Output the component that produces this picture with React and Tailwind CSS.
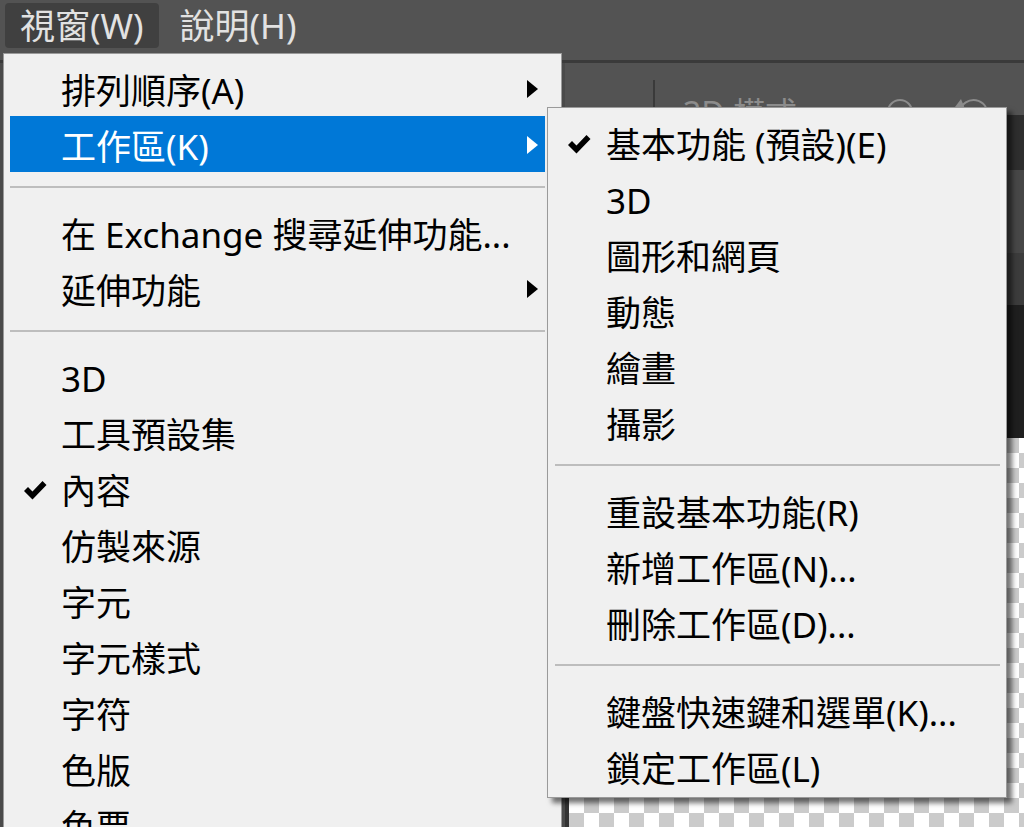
import clsx from 'clsx';

const windowMenu = [
  { label: '排列順序(A)', arrow: true },
  { label: '工作區(K)', arrow: true, active: true },
  { sep: true },
  { label: '在 Exchange 搜尋延伸功能...' },
  { label: '延伸功能', arrow: true },
  { sep: true },
  { label: '3D' },
  { label: '工具預設集' },
  { label: '內容', checked: true },
  { label: '仿製來源' },
  { label: '字元' },
  { label: '字元樣式' },
  { label: '字符' },
  { label: '色版' },
  { label: '色票' },
];

const workspaceMenu = [
  { label: '基本功能 (預設)(E)', checked: true },
  { label: '3D' },
  { label: '圖形和網頁' },
  { label: '動態' },
  { label: '繪畫' },
  { label: '攝影' },
  { sep: true },
  { label: '重設基本功能(R)' },
  { label: '新增工作區(N)...' },
  { label: '刪除工作區(D)...' },
  { sep: true },
  { label: '鍵盤快速鍵和選單(K)...' },
  { label: '鎖定工作區(L)' },
];

function CheckMark() {
  return (
    <svg width="23" height="21" viewBox="0 0 23 21">
      <path d="M0 11 L4 7 L8.5 11.5 L18.5 1 L22.5 5 L8.5 19.5 Z" fill="currentColor" />
    </svg>
  );
}

function SubArrow() {
  return (
    <svg width="11" height="18" viewBox="0 0 11 18" className="mr-[7px] mt-[2px]">
      <path d="M0 0 L11 9 L0 18 Z" fill="currentColor" />
    </svg>
  );
}

function MenuList({ items, checkPad }) {
  return items.map((item, i) => {
    if (item.sep) {
      return (
        <div key={i} className="h-[32px] pt-[14px]">
          <div className="h-[2px] bg-[#bdbdbd]" />
        </div>
      );
    }
    return (
      <div
        key={i}
        className={clsx(
          'flex h-[56px] items-center',
          item.active ? 'bg-[#0078d7] text-white' : 'text-black'
        )}
      >
        <span className={clsx('flex w-[51px] shrink-0 pt-[4px]', checkPad)}>
          {item.checked && <CheckMark />}
        </span>
        <span className="flex-1 whitespace-nowrap pt-[5px] text-[35px] leading-none">{item.label}</span>
        {item.arrow && <SubArrow />}
      </div>
    );
  });
}

export default function App() {
  return (
    <div className="relative h-[827px] w-[1024px] overflow-hidden bg-[#535353] font-['Noto_Sans','Noto_Sans_CJK_TC',sans-serif]">
      {/* app menu bar */}
      <div className="flex h-[63px] items-start gap-[6px] border-b-[3px] border-[#3a3a3a] pl-[5px] pt-[3px] text-[35px] leading-[45px] text-[#e2e2e2]">
        <div className="h-[45px] rounded-[4px] bg-[#404040] px-[15px]">視窗(W)</div>
        <div className="h-[45px] px-[15px]">說明(H)</div>
      </div>

      {/* workspace behind the menus */}
      <div className="flex h-[764px]">
        <div className="w-[565px] bg-[#4a4a4a]" />
        <div className="flex flex-1 flex-col">
          <div className="flex h-[52px] items-start overflow-hidden bg-[#535353]">
            <div className="ml-[88px] mt-[17px] h-[35px] w-[2px] bg-[#3a3a3a]" />
            <span className="ml-[28px] mt-[34px] text-[32px] leading-none text-[#8c8c8c]">3D 模式:</span>
            <svg width="28" height="28" viewBox="0 0 28 28" className="ml-[80px] mt-[35px]">
              <circle cx="14" cy="14" r="12" fill="none" stroke="#8c8c8c" strokeWidth="2" />
            </svg>
            <svg width="42" height="42" viewBox="0 0 42 42" className="ml-[38px] mt-[30px]">
              <path d="M8 18 A14 14 0 1 1 21 35" fill="none" stroke="#8c8c8c" strokeWidth="2" />
              <path d="M3 14 L9 6 L13 16 Z" fill="#8c8c8c" />
            </svg>
          </div>
          <div className="h-[55px] bg-[#2e2e2e]" />
          <div className="h-[83px] bg-[#474747]" />
          <div className="h-[52px] bg-[#3c3c3c]" />
          <div className="h-[133px] bg-[#1f1f1f]" />
          <div className="flex-1 border-l-[4px] border-[#333] bg-[repeating-conic-gradient(#cbcbcb_0%_25%,#ffffff_0%_50%)] bg-[length:30px_30px]" />
        </div>
      </div>

      {/* window menu */}
      <div className="absolute left-[3px] top-[53px] h-[800px] w-[559px] border border-[#9a9a9a] bg-[#f0f0f0] pl-[6px] pr-[16px] pt-[6px]">
        <MenuList items={windowMenu} checkPad="pl-[14px]" />
      </div>

      {/* workspace submenu */}
      <div className="absolute left-[547px] top-[107px] h-[691px] w-[460px] border border-[#9a9a9a] bg-[#f0f0f0] pl-[7px] pr-[6px] pt-[6px] shadow-[5px_5px_5px_rgba(0,0,0,0.55)]">
        <MenuList items={workspaceMenu} checkPad="pl-[13px]" />
      </div>
    </div>
  );
}
